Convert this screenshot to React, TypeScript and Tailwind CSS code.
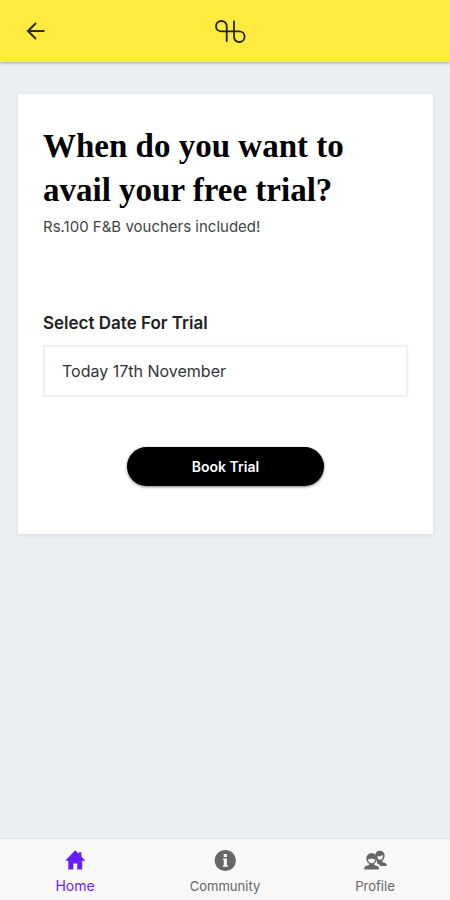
import React, { useState } from 'react';

const HomeIcon = () => (
  <svg viewBox="0 0 24 24" className="h-6 w-6" fill="currentColor" aria-hidden="true">
    <path d="M5.300 21.500V12.700H2.200L12.200 2.200l3.600 3.600V4.300h2.600v4.200l4 4.200h-3.200v8.800h-5v-6h-3.900v6z" />
  </svg>
);

const InfoIcon = () => (
  <svg viewBox="0 0 24 24" className="h-6 w-6" aria-hidden="true">
    <circle cx="12.300" cy="12.500" r="10.600" fill="currentColor" />
    <rect x="10.700" y="6" width="3.200" height="3" fill="#f8f8f8" />
    <path d="M10 10.500h3.900v6.700h1v1.500H10v-1.500h.8v-5.200H10z" fill="#f8f8f8" />
  </svg>
);

const PeopleIcon = () => (
  <svg viewBox="0 0 24 24" className="h-6 w-6" fill="currentColor" aria-hidden="true">
    <path d="M12.300 6.200C12.900 4 14.400 2.700 16.700 2.700c2.900 0 4.900 2 4.900 4.900 0 2.300-.8 4.100-2.300 5.100v1.300l2.900 1.100c1 .4 1.500 1.200 1.500 3h-6.500c-.4-1.200-1.200-1.800-3-2.500z" />
    <path d="M14.300 8.200c2.300 0 4.300-.4 5.600-1.300.4 2.700-1 4.900-3 4.900-.8 0-1.500-.2-2.100-.7.1-1-.1-2-.5-2.900z" fill="#f8f8f8" />
    <path d="M8.500 5.200c3.100 0 5.200 2.100 5.200 5 0 2.600-1 4.500-2.600 5.600v1.100l3.200 1.100c1.300.4 1.700 1.400 1.700 3.600H1.200c0-2.200.4-3.200 1.700-3.600L6 16.900v-1.100c-1.600-1.100-2.600-3-2.600-5.600 0-2.900 2-5 5.100-5z" />
    <path d="M4.900 11.300c1.500 0 2.800-.3 3.600-1 .9.700 2.200 1 3.700 1-.1 2.400-1.600 4-3.600 4s-3.600-1.600-3.700-4z" fill="#f8f8f8" />
  </svg>
);

const Logo = () => (
  <svg viewBox="0 0 32 24" className="h-6 w-8" fill="none" stroke="#25230c" strokeWidth="1.800" strokeLinecap="round" aria-hidden="true">
    <path d="M11.700 22V7.500C11.700 4 9.500 2 6.400 2 3.300 2 1 4.200 1 7.200s2.300 5.200 5.400 5.200h17.800c3.100 0 5.400 2.200 5.400 5.200s-2.300 5.400-5.300 5.400c-3.100 0-5.300-2.200-5.300-5.700V2.500" />
  </svg>
);

const tabs = [
  { id: 'home', label: 'Home', icon: HomeIcon },
  { id: 'community', label: 'Community', icon: InfoIcon },
  { id: 'profile', label: 'Profile', icon: PeopleIcon },
];

function App() {
  const [activeTab, setActiveTab] = useState('home');
  const [date, setDate] = useState('Today 17th November');

  return (
    <div className="flex min-h-screen flex-col bg-[#ebeff2] font-['Inter',sans-serif] text-[#222]">
      <header className="grid h-[62px] grid-cols-[1fr_auto_1fr] items-center bg-[#ffeb3f] pl-6 pr-3 shadow-[0_1px_3px_rgba(70,90,110,0.5)]">
        <button type="button" aria-label="Back" className="justify-self-start">
          <svg viewBox="0 0 24 24" className="h-6 w-6" fill="none" stroke="#2b2b2b" strokeWidth="2" aria-hidden="true">
            <path d="M20.500 12H4M12 4l-8 8 8 8" />
          </svg>
        </button>
        <Logo />
      </header>

      <main className="flex-1 pl-[18px] pr-[17px] pt-8">
        <section className="bg-white px-[25px] pb-12 pt-[30px] shadow-[0_1px_4px_rgba(70,90,110,0.12)]">
          <h1 className="font-['Liberation_Serif',serif] text-[33px] font-bold leading-[44px] text-black">
            When do you want to avail your free trial?
          </h1>
          <p className="text-[15px] leading-[30px] text-[#444]">Rs.100 F&amp;B vouchers included!</p>

          <form className="mt-[69px] flex flex-col" onSubmit={(e) => e.preventDefault()}>
            <label htmlFor="trial-date" className="text-[17px] font-semibold leading-6">
              Select Date For Trial
            </label>
            <input
              id="trial-date"
              type="text"
              value={date}
              onChange={(e) => setDate(e.target.value)}
              className="mt-[10px] h-[52px] w-full border-2 border-[#efeff1] bg-white px-[17px] text-base text-[#333] shadow-[0_0_3px_rgba(0,0,0,0.05)] outline-none"
            />
            <button
              type="submit"
              className="mt-[50px] h-[39px] w-[197px] self-center rounded-full bg-black text-sm font-semibold text-white shadow-[0_1px_3px_rgba(0,0,0,0.5)]"
            >
              Book Trial
            </button>
          </form>
        </section>
      </main>

      <nav className="grid h-[62px] grid-cols-3 border-t border-[#dde2e7] bg-[#f8f8f8]">
        {tabs.map(({ id, label, icon: Icon }) => (
          <button
            key={id}
            type="button"
            onClick={() => setActiveTab(id)}
            className={`flex flex-col items-center pt-[9px] ${
              activeTab === id ? 'text-[#651fff]' : 'text-[#666]'
            }`}
          >
            <Icon />
            <span className={activeTab === id ? 'text-sm leading-7' : 'text-[13px] leading-7'}>{label}</span>
          </button>
        ))}
      </nav>
    </div>
  );
}

export default App;
